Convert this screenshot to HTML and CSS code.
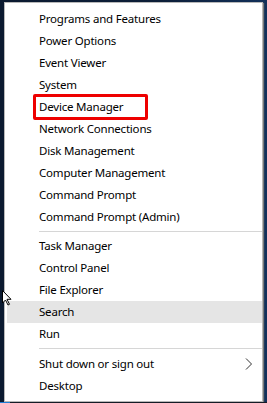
FILE: index.html
```html
<!DOCTYPE html>
<html>
<head>
<meta charset="utf-8">
<link rel="stylesheet" href="styles.css">
</head>
<body>
<div class="desktop">
  <div class="menu">
    <div class="item">Programs and Features</div>
    <div class="item">Power Options</div>
    <div class="item">Event Viewer</div>
    <div class="item">System</div>
    <div class="item marked">Device Manager</div>
    <div class="item">Network Connections</div>
    <div class="item">Disk Management</div>
    <div class="item">Computer Management</div>
    <div class="item">Command Prompt</div>
    <div class="item">Command Prompt (Admin)</div>
    <div class="sep"></div>
    <div class="item">Task Manager</div>
    <div class="item">Control Panel</div>
    <div class="item">File Explorer</div>
    <div class="item hover">Search</div>
    <div class="item">Run</div>
    <div class="sep sep2"></div>
    <div class="item sub">Shut down or sign out
      <svg class="chev" width="8" height="12" viewBox="0 0 8 12"><path d="M1 0.5 L6.5 6 L1 11.5" fill="none" stroke="#333" stroke-width="1"/></svg>
    </div>
    <div class="item">Desktop</div>
  </div>
  <svg class="cursor" width="10" height="16" viewBox="0 0 10 16"><path d="M0.5 0.5 L0.5 13 L3.5 10 L6 15 L7.5 14.3 L5 9.3 L9 9.3 Z" fill="#fff" stroke="#000" stroke-width="1"/></svg>
  <div class="taskbar"><span class="tile"></span></div>
</div>
</body>
</html>
```
FILE: styles.css
```css
html, body {
  margin: 0;
  padding: 0;
}
body {
  width: 267px;
  height: 403px;
  overflow: hidden;
  background: linear-gradient(90deg, #0b1a30 0%, #0c1e38 60%, #12305a 100%);
  font-family: "Segoe UI", "Noto Sans", "Open Sans", sans-serif;
  font-size: 11.5px;
  letter-spacing: -0.2px;
  color: #000;
}
.desktop {
  position: relative;
  width: 267px;
  height: 403px;
  display: flex;
  flex-direction: column;
}
.menu {
  margin: 2px 0 0 4px;
  width: 257px;
  background: #fff;
  border: 1px solid #b8b8b8;
  box-shadow: 1px 1px 1px #7a7a7a;
  padding: 5px 0 4px 0;
  display: flex;
  flex-direction: column;
}
.item {
  height: 22px;
  line-height: 22px;
  padding-left: 32px;
  margin-left: 2px;
  white-space: nowrap;
  position: relative;
}
.item.hover {
  background: #e5e5e5;
}
.marked::after {
  content: "";
  position: absolute;
  left: 26px;
  width: 109px;
  top: -2px;
  height: 20px;
  border: 3px solid #ee0000;
  border-radius: 2px;
}
.sep {
  height: 1px;
  background: #d6d6d6;
  margin: 3px 0 3px 34px;
}
.sep2 {
  margin-bottom: 4px;
}
.chev {
  position: absolute;
  right: 9px;
  top: 5px;
}
.cursor {
  position: absolute;
  left: 2px;
  top: 290px;
}
.taskbar {
  flex: 1;
  background: #141c26;
  position: relative;
}
.tile {
  position: absolute;
  left: 0;
  top: 0;
  width: 10px;
  height: 4px;
  background: #1e7fd6;
}
```
